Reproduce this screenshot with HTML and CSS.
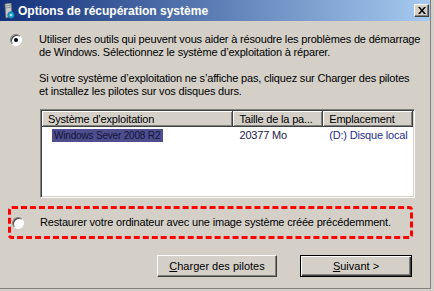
FILE: index.html
```html
<!DOCTYPE html>
<html lang="fr">
  <head>
    <meta charset="UTF-8" />
    <meta name="viewport" content="width=device-width, initial-scale=1.0" />
    <title>Options de récupération système</title>
    <link rel="stylesheet" href="styles.css">
  </head>
  <body>
    <div class="window">
      <div class="titlebar">
        <svg class="title-icon" width="12" height="16" viewBox="0 0 12 16">
          <path d="M2 1 L8 0 L9 13 L3 15 Z" fill="#c8c8c8" stroke="#7a7a7a" stroke-width="0.8" />
          <path d="M3 3 L8 2" stroke="#888" stroke-width="0.8" />
          <path d="M3 5 L8 4" stroke="#888" stroke-width="0.8" />
          <circle cx="8" cy="12" r="3.2" fill="#2aa6d8" stroke="#0d6e9a" stroke-width="0.8" />
          <circle cx="8" cy="12" r="1" fill="#e8f8ff" />
        </svg>
        <span class="title-text">Options de récupération système</span>
        <button type="button" class="close-btn">
          <svg width="8" height="7" viewBox="0 0 8 7">
            <path d="M0 0 L2 0 L4 2.5 L6 0 L8 0 L5 3.5 L8 7 L6 7 L4 4.5 L2 7 L0 7 L3 3.5 Z" fill="#000" />
          </svg>
        </button>
      </div>

      <div class="content">
        <div class="option">
          <span class="radio checked"></span>
          <div class="option-text">
            <p>Utiliser des outils qui peuvent vous aider à résoudre les problèmes de démarrage<br>de Windows. Sélectionnez le système d’exploitation à réparer.</p>
            <p>Si votre système d’exploitation ne s’affiche pas, cliquez sur Charger des pilotes<br>et installez les pilotes sur vos disques durs.</p>
          </div>
        </div>

        <div class="listview">
          <div class="lv-header">
            <div class="lv-col col-os">Système d’exploitation</div>
            <div class="lv-col col-size">Taille de la pa...</div>
            <div class="lv-col col-loc">Emplacement</div>
          </div>
          <div class="lv-row">
            <div class="lv-cell col-os"><span class="selected">Windows Sever 2008 R2</span></div>
            <div class="lv-cell col-size size-text">20377 Mo</div>
            <div class="lv-cell col-loc loc-text">(D:) Disque local</div>
          </div>
        </div>

        <div class="option highlight">
          <span class="radio"></span>
          <div class="option-text">Restaurer votre ordinateur avec une image système créée précédemment.</div>
        </div>

        <div class="buttons">
          <button type="button" class="btn"><u>C</u>harger des pilotes</button>
          <button type="button" class="btn btn-default"><u>S</u>uivant &gt;</button>
        </div>
      </div>
    </div>
  </body>
</html>
```

FILE: styles.css
```css
body {
  margin: 0;
  background-color: #d4d0c8;
  font-family: "Liberation Sans", Arial, sans-serif;
  font-size: 11px;
  color: #000;
}
.window {
  width: 431px;
  height: 289px;
  box-sizing: border-box;
  background-color: #d4d0c8;
  border-right: 1px solid #808080;
  border-bottom: 1px solid #808080;
}
.titlebar {
  height: 21px;
  display: flex;
  align-items: center;
  padding: 0 1px 0 3px;
  background: linear-gradient(to right, #13317a, #a6caf0);
}
.title-icon {
  margin-right: 3px;
}
.title-text {
  color: white;
  font-weight: bold;
  font-size: 12px;
  white-space: nowrap;
}
.close-btn {
  margin-left: auto;
  width: 15px;
  height: 13px;
  padding: 0;
  display: flex;
  align-items: center;
  justify-content: center;
  background-color: #d4d0c8;
  border: 1px solid;
  border-color: #fff #404040 #404040 #fff;
  box-shadow: inset -1px -1px #808080;
}
.content {
  padding: 12px 0 0 0;
  letter-spacing: -0.18px;
}
.option {
  display: flex;
  align-items: flex-start;
}
.option-text {
  margin-left: 17px;
  line-height: 13px;
  white-space: nowrap;
}
.option-text p {
  margin: 0 0 13px 0;
}
.option-text p:last-child {
  margin-bottom: 0;
}
.radio {
  flex: none;
  width: 12px;
  height: 12px;
  margin: 1px 0 0 10px;
  box-sizing: border-box;
  border-radius: 50%;
  background-color: white;
  border: 1px solid;
  border-color: #808080 #fff #fff #808080;
  box-shadow: inset 1px 1px #404040;
  position: relative;
}
.radio.checked::after {
  content: "";
  position: absolute;
  left: 3px;
  top: 3px;
  width: 4px;
  height: 4px;
  border-radius: 50%;
  background-color: #000;
}
.listview {
  margin: 11px 0 0 40px;
  width: 375px;
  height: 89px;
  box-sizing: border-box;
  background: white;
  border: 1px solid;
  border-color: #808080 #fff #fff #808080;
  box-shadow: inset 1px 1px #404040, inset -1px -1px #d4d0c8;
  padding: 1px;
}
.lv-header {
  display: flex;
  height: 16px;
}
.lv-col {
  box-sizing: border-box;
  background-color: #d4d0c8;
  border-right: 1px solid #404040;
  border-bottom: 1px solid #404040;
  box-shadow: inset 1px 1px #fff, inset -1px -1px #808080;
  padding: 1px 0 0 6px;
  line-height: 14px;
  white-space: nowrap;
}
.col-os {
  width: 192px;
}
.col-size {
  width: 90px;
}
.col-loc {
  width: 90px;
}
.lv-row {
  display: flex;
  margin-top: 2px;
  height: 13px;
  line-height: 13px;
}
.lv-cell {
  box-sizing: border-box;
  padding-left: 6px;
  white-space: nowrap;
}
.lv-cell.col-os {
  padding-left: 10px;
}
.selected {
  display: inline-block;
  background-color: #4e4e8e;
  color: #14143a;
  font-size: 10px;
  padding: 0 3px 0 2px;
}
.size-text {
  color: #1a1a4a;
}
.loc-text {
  color: #1f2e8f;
}
.highlight {
  margin: 8px 0 0 8px;
  width: 405px;
  height: 33px;
  box-sizing: border-box;
  border: 3px dashed #ff0000;
  border-radius: 4px;
  align-items: center;
}
.highlight .radio {
  margin: 0 0 0 1px;
}
.highlight .option-text {
  margin-left: 16px;
}
.buttons {
  display: flex;
  justify-content: flex-end;
  gap: 23px;
  margin: 16px 18px 0 0;
}
.btn {
  height: 22px;
  width: 120px;
  box-sizing: border-box;
  font-family: "Liberation Sans", Arial, sans-serif;
  font-size: 11px;
  color: #000;
  background-color: #d4d0c8;
  border: 1px solid;
  border-color: #fff #404040 #404040 #fff;
  box-shadow: inset -1px -1px #808080;
  padding: 0;
}
.btn-default {
  width: 112px;
  border: 1px solid #000;
  box-shadow: inset 1px 1px #fff, inset -1px -1px #404040, inset -2px -2px #808080;
}
```
